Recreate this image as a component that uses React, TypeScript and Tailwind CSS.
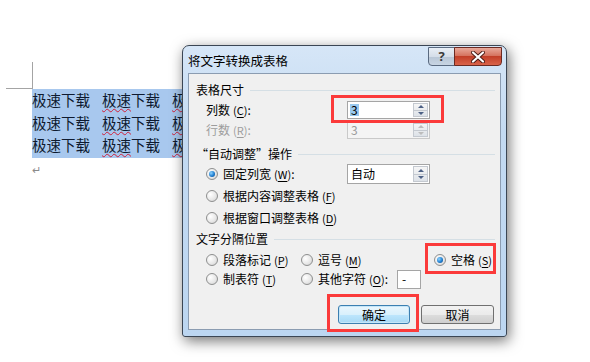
const font = "font-['Noto_Sans_CJK_SC','Noto_Sans',sans-serif]";

function Key({ k }: { k: string }) {
  return (
    <span className="ml-[3px] text-[11px]">
      (<span className="underline underline-offset-2">{k}</span>)
    </span>
  );
}

function Radio({ checked = false }: { checked?: boolean }) {
  return (
    <span className="relative inline-flex h-[12px] w-[12px] shrink-0 items-center justify-center rounded-full border border-[#8e8f8f] bg-[radial-gradient(circle_at_35%_35%,#ffffff_0%,#e6e6e6_60%,#c9c9c9_100%)]">
      {checked && (
        <span className="h-[6px] w-[6px] rounded-full bg-[radial-gradient(circle_at_35%_35%,#8ed3ff_0%,#1f7fd1_55%,#0b3f7c_100%)]" />
      )}
    </span>
  );
}

function Spin({ value, disabled = false, selected = false }: { value: string; disabled?: boolean; selected?: boolean }) {
  return (
    <div
      className={`flex h-[18px] w-[83px] items-stretch border ${
        disabled ? "border-[#c9c9c9] bg-[#f4f4f4] text-[#9a9a9a]" : "border-[#a5a5a5] bg-white text-black"
      }`}
    >
      <div className="flex flex-1 items-center pl-[2px] text-[12px] leading-none">
        <span className={selected ? "bg-[#99c9ef] px-[1px]" : "px-[1px]"}>{value}</span>
      </div>
      <div className="m-[1px] flex w-[15px] flex-col border border-[#c4c9d0] bg-[linear-gradient(#f6f6f6,#dde2e8)]">
        <div className="flex flex-1 items-center justify-center border-b border-[#c4c9d0]">
          <span className={`h-0 w-0 border-x-[3px] border-b-[3px] border-x-transparent ${disabled ? "border-b-[#bcbcbc]" : "border-b-[#4d6185]"}`} />
        </div>
        <div className="flex flex-1 items-center justify-center">
          <span className={`h-0 w-0 border-x-[3px] border-t-[3px] border-x-transparent ${disabled ? "border-t-[#bcbcbc]" : "border-t-[#4d6185]"}`} />
        </div>
      </div>
    </div>
  );
}

function Header({ text, className = "" }: { text: string; className?: string }) {
  return (
    <div className={`flex h-[20px] items-center pl-[7px] pr-[5px] ${className}`}>
      <span className="text-[12px] text-black">{text}</span>
      <span className="ml-[6px] h-px flex-1 bg-[#d5dfe5]" />
    </div>
  );
}

function Doc() {
  const rows = [0, 1, 2];
  return (
    <div className={`pt-[62px] ${font}`}>
      <div className="ml-[6px] h-[27px] w-[27px] border-b border-r border-[#a4a4a4]" />
      <div className="ml-[32px] w-[160px] bg-[#a8c8ee] pb-[1px]">
        {rows.map((r) => (
          <div key={r} className="flex h-[22.7px] items-center text-[14.5px] leading-none text-[#0e1a2f]">
            <span className="w-[70px]">极速下载</span>
            <span className="w-[70px]">
              <span className="underline decoration-wavy decoration-[#d0203a] decoration-1 underline-offset-2">极速</span>下载
            </span>
            <span className="underline decoration-wavy decoration-[#d0203a] decoration-1 underline-offset-2">极</span>
          </div>
        ))}
      </div>
      <div className="ml-[32px] mt-[6px] text-[11px] leading-none text-[#8a8a8a]">↵</div>
    </div>
  );
}

function TitleButtons() {
  return (
    <div className="absolute right-[4px] top-[1px] flex">
      <div className="flex h-[19px] w-[27px] items-center justify-center rounded-bl-[4px] border border-[#5a6a80] bg-[linear-gradient(#e8eef5,#d5dee9_50%,#b8c6d6_51%,#c8d5e3)] text-[13px] font-bold leading-none text-[#3a3a3a]">
        ?
      </div>
      <div className="-ml-px flex h-[19px] w-[48px] items-center justify-center rounded-br-[4px] border border-[#6b2a22] bg-[linear-gradient(#e9a99a,#d4705c_48%,#c23f28_50%,#d9634a)]">
        <svg width="14" height="12" viewBox="0 0 14 12" aria-hidden="true">
          <path d="M2 1.5l10 9M12 1.5l-10 9" stroke="#4a1a14" strokeWidth="4" strokeLinecap="round" />
          <path d="M2 1.5l10 9M12 1.5l-10 9" stroke="#ffffff" strokeWidth="2.2" strokeLinecap="round" />
        </svg>
      </div>
    </div>
  );
}

function RedBox({ className }: { className: string }) {
  return <div className={`pointer-events-none absolute border-[3px] border-[#fb3a3a] ${className}`} />;
}

function Dialog() {
  return (
    <div className="absolute left-[182px] top-[45px] h-[292px] w-[325px] rounded-t-[7px] rounded-b-[3px] border border-[#3b4654] bg-[linear-gradient(#d6e6f7,#c3daf2_30%,#bcd6f1)] shadow-[2px_4px_14px_rgba(0,0,0,0.55)]">
      <TitleButtons />
      <div className={`flex h-[27px] items-center pl-[5px] pt-[4px] text-[12.5px] text-black ${font}`}>将文字转换成表格</div>
      <div className={`relative mx-[5px] h-[257px] border border-[#8b9cb1] bg-[#f0f0f0] text-[12px] text-black ${font}`}>
        <div className="pt-[6px]">
          <Header text="表格尺寸" />
          <div className="flex h-[20px] items-center">
            <div className="w-[158px] pl-[17px]">
              列数<Key k="C" />:
            </div>
            <Spin value="3" selected />
          </div>
          <div className="flex h-[20px] items-center text-[#9d9d9d]">
            <div className="w-[158px] pl-[17px]">
              行数<Key k="R" />:
            </div>
            <Spin value="3" disabled />
          </div>
          <Header text="“自动调整”操作" className="mt-[4px]" />
          <div className="flex h-[20px] items-center">
            <div className="flex w-[158px] items-center gap-[5px] pl-[17px]">
              <Radio checked />
              <span>
                固定列宽<Key k="W" />:
              </span>
            </div>
            <div className="flex h-[20px] w-[83px] items-stretch border border-[#a5a5a5] bg-white">
              <div className="flex flex-1 items-center pl-[3px]">自动</div>
              <div className="m-[1px] flex w-[15px] flex-col border border-[#c4c9d0] bg-[linear-gradient(#f6f6f6,#dde2e8)]">
                <div className="flex flex-1 items-center justify-center border-b border-[#c4c9d0]">
                  <span className="h-0 w-0 border-x-[3px] border-b-[3px] border-x-transparent border-b-[#4d6185]" />
                </div>
                <div className="flex flex-1 items-center justify-center">
                  <span className="h-0 w-0 border-x-[3px] border-t-[3px] border-x-transparent border-t-[#4d6185]" />
                </div>
              </div>
            </div>
          </div>
          <div className="mt-[2px] flex h-[20px] items-center gap-[5px] pl-[17px]">
            <Radio />
            <span>
              根据内容调整表格<Key k="F" />
            </span>
          </div>
          <div className="mt-[2px] flex h-[20px] items-center gap-[5px] pl-[17px]">
            <Radio />
            <span>
              根据窗口调整表格<Key k="D" />
            </span>
          </div>
          <Header text="文字分隔位置" className="mt-[1px]" />
          <div className="mt-[1px] grid h-[19px] grid-cols-[95px_133px_1fr] items-center pl-[17px]">
            <div className="flex items-center gap-[5px]">
              <Radio />
              <span>
                段落标记<Key k="P" />
              </span>
            </div>
            <div className="flex items-center gap-[5px]">
              <Radio />
              <span>
                逗号<Key k="M" />
              </span>
            </div>
            <div className="flex items-center gap-[5px]">
              <Radio checked />
              <span>
                空格<Key k="S" />
              </span>
            </div>
          </div>
          <div className="grid h-[20px] grid-cols-[95px_1fr] items-center pl-[17px]">
            <div className="flex items-center gap-[5px]">
              <Radio />
              <span>
                制表符<Key k="T" />
              </span>
            </div>
            <div className="flex items-center gap-[5px]">
              <Radio />
              <span>
                其他字符<Key k="O" />:
              </span>
              <div className="ml-[4px] flex h-[19px] w-[24px] items-center border border-[#a5a5a5] bg-white pl-[4px] leading-none">-</div>
            </div>
          </div>
          <div className="mt-[16px] flex gap-[11px] pl-[149px]">
            <div className="flex h-[19px] w-[72px] items-center justify-center rounded-[3px] border border-[#3c7fb1] bg-[linear-gradient(#eaf6fd,#d9f0fc_50%,#bee6fd_51%,#a7d9f5)] shadow-[inset_0_0_0_1px_#c5e6f8]">
              确定
            </div>
            <div className="flex h-[19px] w-[73px] items-center justify-center rounded-[3px] border border-[#707070] bg-[linear-gradient(#f2f2f2,#ebebeb_50%,#dddddd_51%,#cfcfcf)]">
              取消
            </div>
          </div>
        </div>
        <RedBox className="left-[142px] top-[21px] h-[28px] w-[113px]" />
        <RedBox className="left-[236px] top-[169px] h-[31px] w-[71px]" />
        <RedBox className="left-[138px] top-[220px] h-[38px] w-[92px]" />
      </div>
    </div>
  );
}

export default function App() {
  return (
    <div className="relative h-[362px] w-[590px] overflow-hidden bg-white">
      <Doc />
      <Dialog />
    </div>
  );
}
